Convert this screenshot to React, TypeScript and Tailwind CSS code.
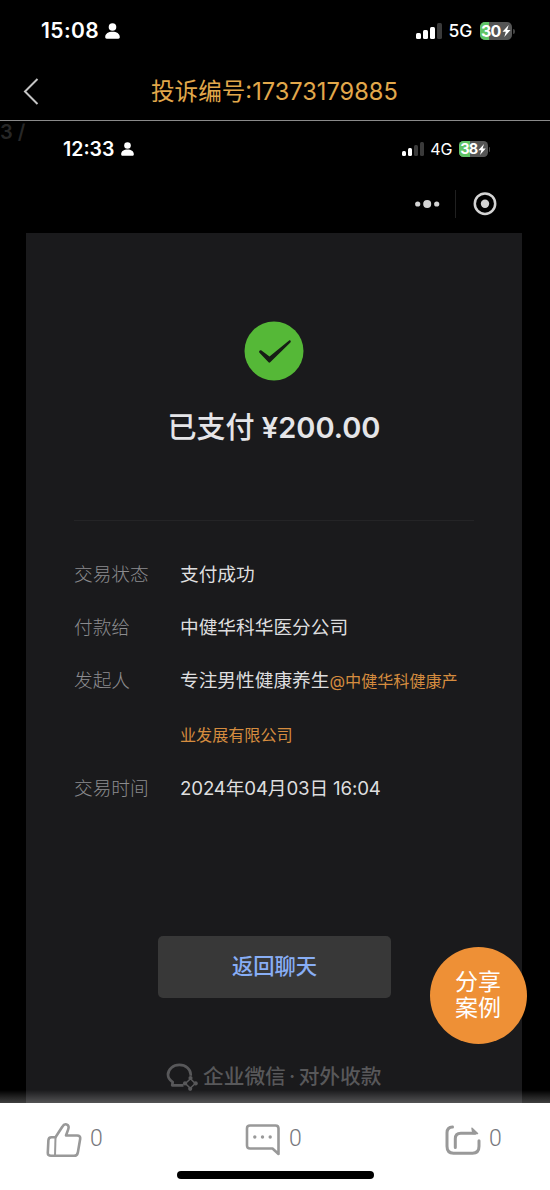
const barHeights = ["h-[6px]", "h-[9px]", "h-[12px]", "h-[16px]"];
const smallBarHeights = ["h-[5px]", "h-[8px]", "h-[11px]", "h-[14px]"];

function PersonIcon({ className }: { className: string }) {
  return (
    <svg viewBox="0 0 15 16" className={className} fill="#fff">
      <circle cx="7.5" cy="4" r="3.8" />
      <path d="M0.2 14c0-3.400 3.200-5.300 7.300-5.300s7.300 1.900 7.300 5.300c0 1.100-.5 1.700-1.500 1.700H1.700c-1 0-1.500-.6-1.500-1.700Z" />
    </svg>
  );
}

function Signal({ active, small }: { active: number; small?: boolean }) {
  const heights = small ? smallBarHeights : barHeights;
  return (
    <div className={`flex items-end ${small ? "gap-[2px]" : "gap-[2.5px]"}`}>
      {heights.map((h, i) => (
        <span
          key={h}
          className={`${h} ${small ? "w-[4.2px]" : "w-[4.5px]"} rounded-[1.5px] ${
            i < active ? "bg-white" : "bg-[#3a3a3a]"
          }`}
        />
      ))}
    </div>
  );
}

function Battery({ level, small }: { level: number; small?: boolean }) {
  return (
    <div className="flex items-center gap-px">
      <div
        className={`relative flex items-center justify-center overflow-hidden bg-[#555] font-bold text-white ${
          small
            ? "h-[16px] w-[29px] rounded-[4.5px] text-[14.5px]"
            : "h-[18px] w-[32.5px] rounded-[5px] text-[16px]"
        }`}
      >
        <div className="absolute inset-y-0 left-0 bg-[#5fc466]" style={{ width: `${level}%` }} />
        <span className="relative leading-none tracking-[-0.8px]">{level}</span>
        <svg viewBox="0 0 8 12" className={`relative ml-[1px] ${small ? "h-[11px] w-[8px]" : "h-[12px] w-[9px]"}`} fill="#fff">
          <path d="M6.200 0 0 6.800h3.300L1.800 12 8 5H4.700Z" />
        </svg>
      </div>
      <span className="h-[5px] w-[1.5px] rounded-r bg-[#444]" />
    </div>
  );
}

function Row({ label, children }: { label: string; children: React.ReactNode }) {
  return (
    <div className="flex text-[18.7px] leading-[53px]">
      <div className="w-[106px] shrink-0 font-light text-[#8c8c8f]">{label}</div>
      <div className="w-[290px] text-[#dededf]">{children}</div>
    </div>
  );
}

function CompanyLogo() {
  return (
    <svg viewBox="0 0 32 28" className="h-[28px] w-[32px] shrink-0" fill="none" stroke="#58585a">
      <path
        d="M17.500 22.300H6.200l.5-3.200C3.500 17 2 14.500 2 11.700 2 6 7.200 1.900 13.400 1.900c6.300 0 11.300 4.300 11.300 9.600v1.200"
        strokeWidth="2.700"
        strokeLinejoin="round"
      />
      <path d="m24.500 15.700 4.700 4.800-4.900 4.800-4.900-4.800Z" strokeWidth="1.500" />
      <g fill="#58585a" stroke="none">
        <circle cx="24.500" cy="15" r="2.100" />
        <circle cx="29.700" cy="20.400" r="2.100" />
        <circle cx="24.200" cy="25.800" r="2.100" />
        <circle cx="19" cy="20.400" r="2.100" />
      </g>
    </svg>
  );
}

function LikeIcon() {
  return (
    <svg viewBox="0 0 36 36" className="h-[36px] w-[36px]" fill="none" stroke="#999" strokeWidth="2.600" strokeLinejoin="round">
      <path d="M9.500 15.200 16.300 4.800C17.400 2.700 19 1.900 20.600 2.400c2.200.7 2.400 2.900 1.600 5l-2.200 6.100h11.200c2.200 0 3.300 1.300 3 3.300l-2.300 13.400c-.4 2.300-1.600 3.600-3.800 3.600H5c-2.200 0-3.300-1-3.200-3.100l.6-12.500c.1-2 1.100-3 3.100-3h4Z" />
      <path d="M9.500 15.200 9 33.500" strokeWidth="2" />
    </svg>
  );
}

function CommentIcon() {
  return (
    <svg viewBox="0 0 36 34" className="h-[34px] w-[36px]" fill="none" stroke="#999" strokeWidth="2.600" strokeLinejoin="round">
      <path d="M5 2.500h25.500c2 0 3 1 3 3V31l-6-5.500H5c-2 0-3-1-3-3v-17c0-2 1-3 3-3Z" />
      <g fill="#999" stroke="none">
        <circle cx="9.800" cy="14" r="1.700" />
        <circle cx="17.500" cy="14" r="1.700" />
        <circle cx="25.200" cy="14" r="1.700" />
      </g>
    </svg>
  );
}

function ShareIcon() {
  return (
    <svg viewBox="0 0 36 30" className="h-[30px] w-[36px]" fill="none" stroke="#999" strokeWidth="3" strokeLinecap="round">
      <path d="M7.500 2C4 2.200 2 4.200 2 7.700v13.600c0 4.700 2.100 6.900 6.500 6.900h19c4.400 0 6.500-2.200 6.500-6.900v-5.500" />
      <path d="M10.300 22.500v-8.700c0-3.700 1.800-5.500 5.500-5.500H30" />
      <path d="M27 3.200 32.500 8.500H28Z" strokeWidth="1.500" strokeLinejoin="round" fill="#999" />
    </svg>
  );
}

export default function App() {
  return (
    <div className="flex h-[1190px] w-[550px] flex-col overflow-hidden bg-black font-[Inter,'Noto_Sans_CJK_SC',sans-serif]">
      {/* System status bar */}
      <div className="flex h-[62px] shrink-0 items-center pl-[41px] text-white">
        <span className="w-[64px] text-[21px] font-semibold tracking-[0.4px]">15:08</span>
        <PersonIcon className="h-[16px] w-[15px]" />
        <div className="ml-[296px] flex items-center">
          <Signal active={3} />
          <span className="ml-[7px] w-[31px] text-[17.500px] font-medium">5G</span>
          <Battery level={30} />
        </div>
      </div>

      {/* Title bar */}
      <div className="flex h-[59px] shrink-0 items-center border-b border-[#8a8a8a] pl-[23px]">
        <svg viewBox="0 0 16 28" className="h-[28px] w-[16px]" fill="none" stroke="#c4c4c4" strokeWidth="2">
          <path d="M14.500 2 2 14.500 14.500 27" />
        </svg>
        <h1 className="ml-[112px] whitespace-nowrap pt-[2px] text-[23.600px] text-[#e2a84b]">投诉编号:17373179885</h1>
      </div>

      {/* Photo viewer */}
      <div className="relative flex h-[982px] shrink-0 flex-col">
        <span className="absolute left-0 top-0 text-[20px] font-semibold leading-[22px] text-[#272727]">3 /</span>

        <div className="flex h-[56px] shrink-0 items-center pl-[63px] text-white">
          <span className="w-[57.500px] pt-px text-[19.500px] font-semibold">12:33</span>
          <PersonIcon className="h-[14px] w-[13px]" />
          <div className="ml-[268px] flex items-center">
            <Signal active={2} small />
            <span className="ml-[6px] w-[28.500px] text-[16px]">4G</span>
            <Battery level={38} small />
          </div>
        </div>

        <div className="flex h-[56px] shrink-0 items-center pl-[415px] pb-[2px]">
          <svg viewBox="0 0 25 8" className="h-[8px] w-[25px]" fill="#d4d4d4">
            <circle cx="2.700" cy="4" r="2.600" />
            <circle cx="12.200" cy="4" r="4" />
            <circle cx="21.700" cy="4" r="2.600" />
          </svg>
          <span className="ml-[15px] h-[28px] w-px bg-[#202020]" />
          <svg viewBox="0 0 24 24" className="ml-[16.500px] size-[24px]" fill="none">
            <circle cx="12" cy="11.700" r="10.200" stroke="#d4d4d4" strokeWidth="2.500" />
            <circle cx="12" cy="11.700" r="4.200" fill="#d4d4d4" />
          </svg>
        </div>

        <div className="ml-[26px] flex w-[496px] grow flex-col bg-[#1a1a1c]">
          <div className="flex h-[287px] shrink-0 flex-col items-center pt-[88px]">
            <svg viewBox="0 0 60 60" className="size-[60px]">
              <circle cx="30" cy="30" r="29.500" fill="#55b837" />
              <path
                d="M17.500 29.500 25.500 35.500 44.800 19.700c1.500-1 2.700.5 1.600 1.700L26.200 41.300c-.6.6-1.100.6-1.700 0L15.500 31.800c-1.200-1.400.400-3.400 2-2.300Z"
                fill="#171d15"
              />
            </svg>
            <p className="mt-[25px] text-[29px] font-semibold leading-[44px] text-[#e5e5e8]">
              <span className="font-medium">已支付</span> ¥200.00
            </p>
          </div>

          <div className="mx-[48px] flex flex-col border-t border-[#242426] pt-[27px]">
            <Row label="交易状态">支付成功</Row>
            <Row label="付款给">中健华科华医分公司</Row>
            <Row label="发起人">
              专注男性健康养生
              <span className="text-[16.100px] text-[#d58c3f]">@中健华科健康产业发展有限公司</span>
            </Row>
            <Row label="交易时间">
              <span className="tracking-[-0.150px]">2024年04月03日 16:04</span>
            </Row>
          </div>

          <button className="mt-[121px] ml-[132px] h-[62px] w-[233px] shrink-0 rounded-[5px] bg-[#383838] text-[21.300px] font-medium text-[#88aef5]">
            返回聊天
          </button>

          <div className="mt-[64px] ml-[140px] flex items-center gap-[5px] whitespace-nowrap text-[20.700px] font-medium leading-[30px] text-[#58585a]">
            <CompanyLogo />
            <span className="[word-spacing:-2.200px]">企业微信 · 对外收款</span>
          </div>
        </div>

        <div className="absolute inset-x-0 bottom-0 h-[13px] bg-linear-to-b from-transparent to-white/25" />

        <button className="absolute left-[429.500px] top-[825.500px] size-[97px] rounded-full bg-[#ee9036] text-center text-[23px] leading-[26px] text-white">
          分享
          <br />
          案例
        </button>
      </div>

      {/* Action bar */}
      <div className="flex h-[87px] shrink-0 flex-col items-center bg-white">
        <div className="flex h-[68px] w-full items-center pt-[5px] pl-[46px] font-[Roboto,sans-serif] text-[23px] font-light text-[#77777c]">
          <div className="flex w-[199px] items-center gap-[8px]">
            <LikeIcon />
            <span>0</span>
          </div>
          <div className="flex w-[200px] items-center gap-[8px]">
            <CommentIcon />
            <span>0</span>
          </div>
          <div className="flex items-center gap-[8px]">
            <ShareIcon />
            <span>0</span>
          </div>
        </div>
        <div className="h-[8px] w-[197px] rounded-full bg-black" />
      </div>
    </div>
  );
}
